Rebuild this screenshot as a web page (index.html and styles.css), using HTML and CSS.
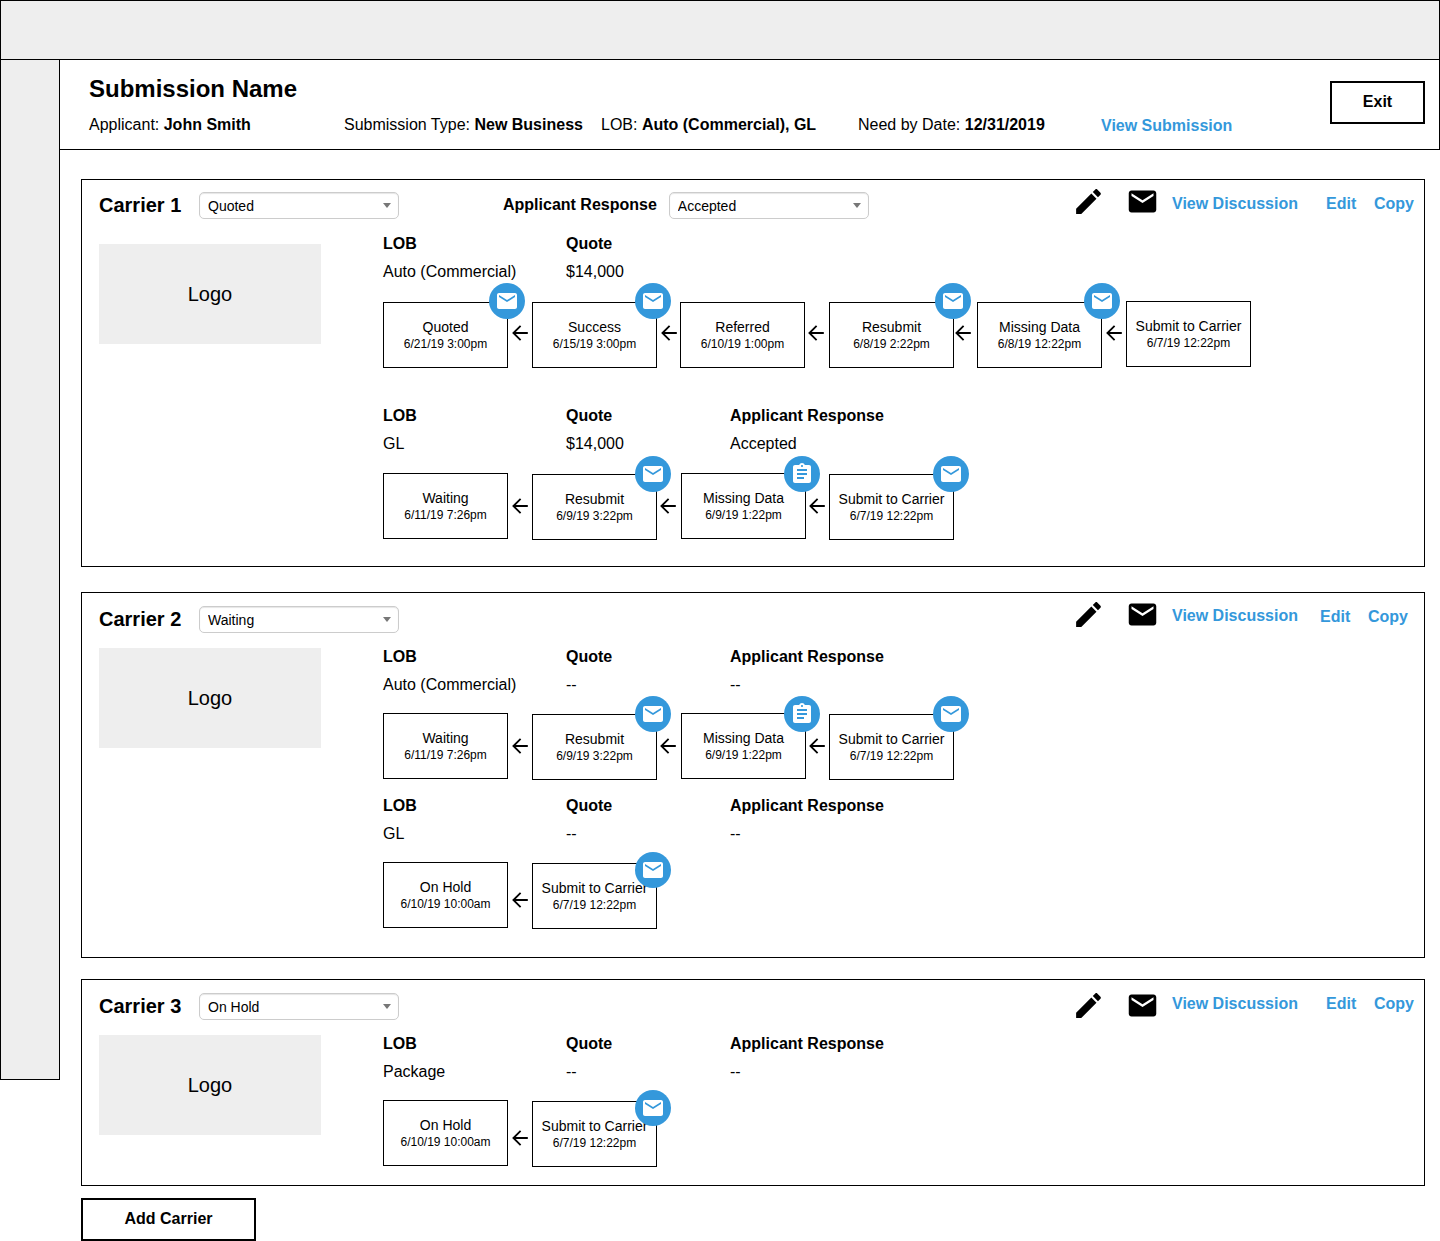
FILE: index.html
```html
<!DOCTYPE html>
<html lang="en">
<head>
    <meta charset="UTF-8">
    <meta name="viewport" content="width=device-width, initial-scale=1.0">
    <title>Submission Name</title>
    <link rel="stylesheet" href="styles.css">
</head>
<body>
    <svg class="sprites" width="0" height="0" aria-hidden="true">
        <symbol id="i-mail" viewBox="0 0 24 24"><path d="M20 4H4c-1.1 0-2 .9-2 2v12c0 1.1.9 2 2 2h16c1.1 0 2-.9 2-2V6c0-1.1-.9-2-2-2zm0 4l-8 5-8-5V6l8 5 8-5v2z"/></symbol>
        <symbol id="i-clip" viewBox="0 0 24 24"><path d="M19 3h-4.18C14.4 1.84 13.3 1 12 1c-1.3 0-2.4.84-2.82 2H5c-1.1 0-2 .9-2 2v14c0 1.1.9 2 2 2h14c1.1 0 2-.9 2-2V5c0-1.1-.9-2-2-2zm-7 0c.55 0 1 .45 1 1s-.45 1-1 1-1-.45-1-1 .45-1 1-1zm2 14H7v-2h7v2zm3-4H7v-2h10v2zm0-4H7V7h10v2z"/></symbol>
        <symbol id="i-edit" viewBox="0 0 24 24"><path d="M3 17.25V21h3.75L17.81 9.94l-3.75-3.75L3 17.25zM20.71 7.04c.39-.39.39-1.02 0-1.41l-2.34-2.34c-.39-.39-1.02-.39-1.41 0l-1.83 1.83 3.75 3.75 1.83-1.83z"/></symbol>
        <symbol id="i-arrow" viewBox="0 0 16 16"><path d="M15.8 8H1.2M8.6 .8L1.4 8l7.2 7.2" fill="none" stroke="#000" stroke-width="1.8"/></symbol>
    </svg>

    <div class="topbar"></div>
    <div class="layout">
        <div class="sidebar"></div>
        <div class="main">
            <header class="header">
                <div class="header-text">
                    <h1>Submission Name</h1>
                    <div class="meta">
                        <span>Applicant: <b>John Smith</b></span>
                        <span>Submission Type: <b>New Business</b></span>
                        <span>LOB: <b>Auto (Commercial), GL</b></span>
                        <span>Need by Date: <b>12/31/2019</b></span>
                        <a class="link view-sub" href="#">View Submission</a>
                    </div>
                </div>
                <button class="btn btn-exit">Exit</button>
            </header>

            <div class="carriers">
                <!-- Carrier 1 -->
                <section class="carrier carrier-1">
                    <div class="carrier-head">
                        <h2>Carrier 1</h2>
                        <div class="select-wrap"><select><option>Quoted</option></select></div>
                        <span class="resp-label">Applicant Response</span>
                        <div class="select-wrap"><select><option>Accepted</option></select></div>
                        <div class="actions">
                            <svg class="icon-edit"><use href="#i-edit"/></svg>
                            <svg class="icon-mail"><use href="#i-mail"/></svg>
                            <a class="link" href="#">View Discussion</a>
                            <a class="link side" href="#">Edit</a>
                            <a class="link side" href="#">Copy</a>
                        </div>
                    </div>
                    <div class="carrier-body">
                        <div class="logo">Logo</div>
                        <div class="details">
                            <div class="lob">
                                <div class="lob-grid">
                                    <b>LOB</b><b>Quote</b><b></b>
                                    <span>Auto (Commercial)</span><span>$14,000</span><span></span>
                                </div>
                                <div class="steps">
                                    <div class="step low"><span class="step-name">Quoted</span><span class="step-date">6/21/19 3:00pm</span><i class="badge up"><svg><use href="#i-mail"/></svg></i></div>
                                    <div class="arrow rise"><svg><use href="#i-arrow"/></svg></div>
                                    <div class="step low"><span class="step-name">Success</span><span class="step-date">6/15/19 3:00pm</span><i class="badge up in3"><svg><use href="#i-mail"/></svg></i></div>
                                    <div class="arrow narrow rise"><svg><use href="#i-arrow"/></svg></div>
                                    <div class="step low"><span class="step-name">Referred</span><span class="step-date">6/10/19 1:00pm</span></div>
                                    <div class="arrow rise nudge"><svg><use href="#i-arrow"/></svg></div>
                                    <div class="step low"><span class="step-name">Resubmit</span><span class="step-date">6/8/19 2:22pm</span><i class="badge up"><svg><use href="#i-mail"/></svg></i></div>
                                    <div class="arrow narrow rise nudge-far"><svg><use href="#i-arrow"/></svg></div>
                                    <div class="step low"><span class="step-name">Missing Data</span><span class="step-date">6/8/19 12:22pm</span><i class="badge up out1"><svg><use href="#i-mail"/></svg></i></div>
                                    <div class="arrow rise"><svg><use href="#i-arrow"/></svg></div>
                                    <div class="step"><span class="step-name">Submit to Carrier</span><span class="step-date">6/7/19 12:22pm</span></div>
                                </div>
                            </div>
                            <div class="lob">
                                <div class="lob-grid">
                                    <b>LOB</b><b>Quote</b><b>Applicant Response</b>
                                    <span>GL</span><span>$14,000</span><span>Accepted</span>
                                </div>
                                <div class="steps">
                                    <div class="step"><span class="step-name">Waiting</span><span class="step-date">6/11/19 7:26pm</span></div>
                                    <div class="arrow"><svg><use href="#i-arrow"/></svg></div>
                                    <div class="step low"><span class="step-name">Resubmit</span><span class="step-date">6/9/19 3:22pm</span><i class="badge in3"><svg><use href="#i-mail"/></svg></i></div>
                                    <div class="arrow nudge"><svg><use href="#i-arrow"/></svg></div>
                                    <div class="step"><span class="step-name">Missing Data</span><span class="step-date">6/9/19 1:22pm</span><i class="badge in3 down"><svg><use href="#i-clip"/></svg></i></div>
                                    <div class="arrow narrow nudge"><svg><use href="#i-arrow"/></svg></div>
                                    <div class="step low"><span class="step-name">Submit to Carrier</span><span class="step-date">6/7/19 12:22pm</span><i class="badge in2"><svg><use href="#i-mail"/></svg></i></div>
                                </div>
                            </div>
                        </div>
                    </div>
                </section>

                <!-- Carrier 2 -->
                <section class="carrier carrier-2">
                    <div class="carrier-head">
                        <h2>Carrier 2</h2>
                        <div class="select-wrap"><select><option>Waiting</option></select></div>
                        <div class="actions">
                            <svg class="icon-edit"><use href="#i-edit"/></svg>
                            <svg class="icon-mail"><use href="#i-mail"/></svg>
                            <a class="link" href="#">View Discussion</a>
                            <a class="link side" href="#">Edit</a>
                            <a class="link side" href="#">Copy</a>
                        </div>
                    </div>
                    <div class="carrier-body">
                        <div class="logo">Logo</div>
                        <div class="details">
                            <div class="lob">
                                <div class="lob-grid">
                                    <b>LOB</b><b>Quote</b><b>Applicant Response</b>
                                    <span>Auto (Commercial)</span><span>--</span><span>--</span>
                                </div>
                                <div class="steps">
                                    <div class="step"><span class="step-name">Waiting</span><span class="step-date">6/11/19 7:26pm</span></div>
                                    <div class="arrow"><svg><use href="#i-arrow"/></svg></div>
                                    <div class="step low"><span class="step-name">Resubmit</span><span class="step-date">6/9/19 3:22pm</span><i class="badge in3"><svg><use href="#i-mail"/></svg></i></div>
                                    <div class="arrow nudge"><svg><use href="#i-arrow"/></svg></div>
                                    <div class="step"><span class="step-name">Missing Data</span><span class="step-date">6/9/19 1:22pm</span><i class="badge in3 down"><svg><use href="#i-clip"/></svg></i></div>
                                    <div class="arrow narrow nudge"><svg><use href="#i-arrow"/></svg></div>
                                    <div class="step low"><span class="step-name">Submit to Carrier</span><span class="step-date">6/7/19 12:22pm</span><i class="badge in2"><svg><use href="#i-mail"/></svg></i></div>
                                </div>
                            </div>
                            <div class="lob">
                                <div class="lob-grid">
                                    <b>LOB</b><b>Quote</b><b>Applicant Response</b>
                                    <span>GL</span><span>--</span><span>--</span>
                                </div>
                                <div class="steps">
                                    <div class="step"><span class="step-name">On Hold</span><span class="step-date">6/10/19 10:00am</span></div>
                                    <div class="arrow drop"><svg><use href="#i-arrow"/></svg></div>
                                    <div class="step low"><span class="step-name">Submit to Carrier</span><span class="step-date">6/7/19 12:22pm</span><i class="badge in3 inset"><svg><use href="#i-mail"/></svg></i></div>
                                </div>
                            </div>
                        </div>
                    </div>
                </section>

                <!-- Carrier 3 -->
                <section class="carrier carrier-3">
                    <div class="carrier-head">
                        <h2>Carrier 3</h2>
                        <div class="select-wrap"><select><option>On Hold</option></select></div>
                        <div class="actions">
                            <svg class="icon-edit"><use href="#i-edit"/></svg>
                            <svg class="icon-mail"><use href="#i-mail"/></svg>
                            <a class="link" href="#">View Discussion</a>
                            <a class="link side" href="#">Edit</a>
                            <a class="link side" href="#">Copy</a>
                        </div>
                    </div>
                    <div class="carrier-body">
                        <div class="logo">Logo</div>
                        <div class="details">
                            <div class="lob">
                                <div class="lob-grid">
                                    <b>LOB</b><b>Quote</b><b>Applicant Response</b>
                                    <span>Package</span><span>--</span><span>--</span>
                                </div>
                                <div class="steps">
                                    <div class="step"><span class="step-name">On Hold</span><span class="step-date">6/10/19 10:00am</span></div>
                                    <div class="arrow drop"><svg><use href="#i-arrow"/></svg></div>
                                    <div class="step low"><span class="step-name">Submit to Carrier</span><span class="step-date">6/7/19 12:22pm</span><i class="badge in3 inset"><svg><use href="#i-mail"/></svg></i></div>
                                </div>
                            </div>
                        </div>
                    </div>
                </section>

                <button class="btn btn-add">Add Carrier</button>
            </div>
        </div>
    </div>
</body>
</html>
```

FILE: styles.css
```css
* {
    box-sizing: border-box;
}
html, body {
    margin: 0;
    padding: 0;
}
body {
    font-family: "Liberation Sans", Arial, sans-serif;
    font-size: 16px;
    color: #000;
    background: #fff;
    height: 1241px;
    overflow: hidden;
}
.sprites {
    position: absolute;
}
.link {
    color: #3498db;
    font-weight: bold;
    text-decoration: none;
}

/* frame */
.topbar {
    height: 60px;
    background: #eee;
    border: 1px solid #000;
}
.layout {
    display: flex;
    align-items: flex-start;
}
.sidebar {
    width: 60px;
    height: 1020px;
    flex: none;
    background: #eee;
    border: 1px solid #000;
    border-top: none;
}
.main {
    flex: 1;
}

/* header */
.header {
    height: 90px;
    display: flex;
    justify-content: space-between;
    padding: 0 14px 0 29px;
    border-right: 1px solid #000;
    border-bottom: 1px solid #000;
}
h1 {
    margin: 0;
    padding-top: 14px;
    font-size: 24px;
    line-height: 30px;
}
.meta {
    display: grid;
    grid-template-columns: 255px 257px 257px 243px auto;
    margin-top: 7px;
    line-height: 28px;
}
.view-sub {
    margin-top: 1px;
}
.btn {
    font-family: inherit;
    font-size: 16px;
    font-weight: bold;
    color: #000;
    background: #fff;
    border: 2px solid #000;
    padding: 0 0 2px;
}
.btn-exit {
    width: 95px;
    height: 43px;
    margin-top: 21px;
}
.btn-add {
    display: block;
    width: 175px;
    height: 43px;
    margin-top: 12px;
}

/* carrier cards */
.carriers {
    padding: 29px 15px 0 21px;
}
.carrier {
    border: 1px solid #000;
}
.carrier-1 {
    height: 388px;
}
.carrier-2 {
    height: 366px;
    margin-top: 25px;
}
.carrier-3 {
    height: 207px;
    margin-top: 21px;
}
.carrier-head {
    display: flex;
    align-items: flex-start;
    height: 49px;
    padding: 13px 0 0 17px;
}
.carrier-1 .carrier-head {
    padding-top: 12px;
}
h2 {
    width: 100px;
    flex: none;
    margin: 0;
    font-size: 20px;
    line-height: 27px;
}
.resp-label {
    margin-left: 104px;
    margin-right: 12px;
    font-weight: bold;
    line-height: 25px;
}
.select-wrap {
    position: relative;
    width: 200px;
    flex: none;
}
.select-wrap::after {
    content: "";
    position: absolute;
    top: 11px;
    right: 8px;
    border-left: 4px solid transparent;
    border-right: 4px solid transparent;
    border-top: 5px solid #777;
}
select {
    display: block;
    width: 100%;
    height: 27px;
    padding: 0 8px;
    font-family: inherit;
    font-size: 14px;
    color: #000;
    background: #fff;
    border: 1px solid #ccc;
    border-radius: 5px;
    appearance: none;
    box-shadow: inset 0 1px 1px rgba(0,0,0,0.1);
}

/* icons and links at the right of a card head */
.actions {
    display: grid;
    grid-template-columns: 54px 46px 154px 48px 50px;
    grid-template-rows: 33px;
    align-items: center;
    margin-left: auto;
    margin-top: -5px;
}
.carrier-2 .actions {
    grid-template-columns: 54px 46px 148px 48px 56px;
    margin-top: -7px;
}
.carrier-3 .actions {
    margin-top: -6px;
}
.carrier-2 .side {
    padding-top: 2px;
}
.icon-edit, .icon-mail {
    width: 33px;
    height: 33px;
    align-self: start;
    margin-top: -2px;
}
.carrier-2 .icon-edit, .carrier-2 .icon-mail {
    margin-top: -1px;
}
.carrier-3 .icon-edit, .carrier-3 .icon-mail {
    margin-top: 2px;
}

/* body of a card */
.carrier-body {
    display: flex;
    padding-left: 17px;
}
.logo {
    width: 222px;
    height: 100px;
    flex: none;
    margin: 6px 62px 0 0;
    background: #eee;
    font-size: 20px;
    display: flex;
    align-items: center;
    justify-content: center;
}
.carrier-1 .logo {
    margin-top: 15px;
}
.lob + .lob {
    margin-top: 11px;
}
.carrier-1 .lob + .lob {
    margin-top: 33px;
}
.lob-grid {
    display: grid;
    grid-template-columns: 183px 164px auto;
    padding-top: 1px;
    line-height: 28px;
}

/* status chain */
.steps {
    display: flex;
    align-items: flex-start;
    margin-top: 14px;
}
.carrier-1 .steps {
    margin-top: 15px;
}
.step {
    position: relative;
    width: 125px;
    height: 66px;
    flex: none;
    display: flex;
    flex-direction: column;
    align-items: center;
    justify-content: center;
    padding-top: 1px;
    border: 1px solid #000;
    white-space: nowrap;
}
.step.low {
    margin-top: 1px;
}
.step-name {
    font-size: 14px;
    line-height: 16px;
}
.step-date {
    margin-top: 1px;
    font-size: 12px;
    line-height: 16px;
}
.arrow {
    width: 24px;
    height: 66px;
    flex: none;
    display: flex;
    align-items: center;
    justify-content: center;
}
.arrow.narrow {
    width: 23px;
}
.arrow.rise {
    padding-bottom: 2px;
}
.arrow.drop {
    padding-top: 10px;
}
.arrow.nudge {
    padding-right: 2px;
}
.arrow.nudge-far {
    padding-right: 5px;
}
.arrow svg {
    width: 16px;
    height: 16px;
    flex: none;
}
.badge {
    position: absolute;
    top: -19px;
    right: -18px;
    width: 36px;
    height: 36px;
    display: flex;
    align-items: center;
    justify-content: center;
    border-radius: 50%;
    background: #3498db;
}
.badge.up {
    top: -20px;
}
.badge.down {
    top: -18px;
}
.badge.inset {
    top: -12px;
}
.badge.in3 {
    right: -15px;
}
.badge.in2 {
    right: -16px;
}
.badge.out1 {
    right: -19px;
}
.badge svg {
    width: 24px;
    height: 24px;
    fill: #fff;
}
```
